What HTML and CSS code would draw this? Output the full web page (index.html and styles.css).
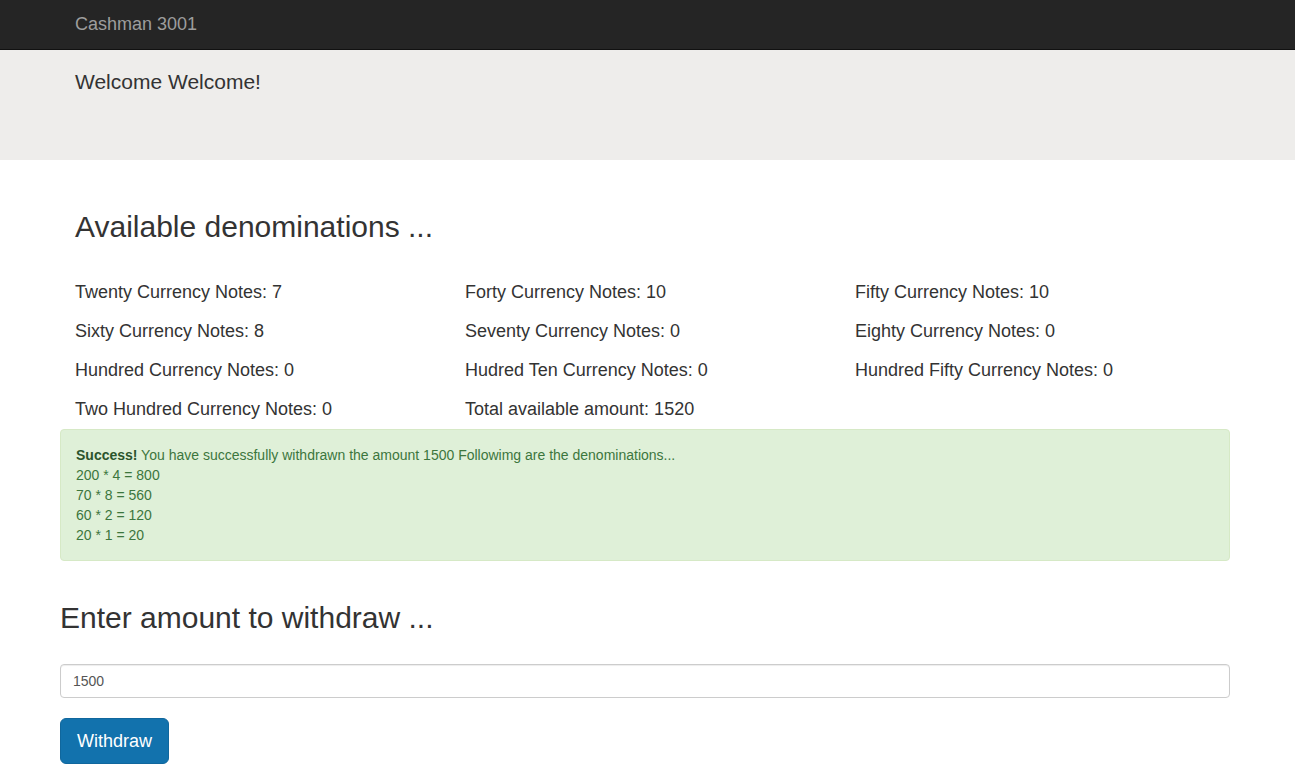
FILE: index.html
```html
<!DOCTYPE html>
<html>
<head>
<meta charset="utf-8">
<title>Cashman 3001</title>
<link rel="stylesheet" href="styles.css">
</head>
<body>
<nav class="navbar">
  <div class="container">
    <span class="brand">Cashman 3001</span>
  </div>
</nav>
<div class="jumbotron">
  <div class="container">
    <p class="lead">Welcome Welcome!</p>
  </div>
</div>
<div class="container">
  <div class="section">
    <h2 class="title">Available denominations ...</h2>
    <div class="notes">
      <div class="note">Twenty Currency Notes: 7</div>
      <div class="note">Forty Currency Notes: 10</div>
      <div class="note">Fifty Currency Notes: 10</div>
      <div class="note">Sixty Currency Notes: 8</div>
      <div class="note">Seventy Currency Notes: 0</div>
      <div class="note">Eighty Currency Notes: 0</div>
      <div class="note">Hundred Currency Notes: 0</div>
      <div class="note">Hudred Ten Currency Notes: 0</div>
      <div class="note">Hundred Fifty Currency Notes: 0</div>
      <div class="note">Two Hundred Currency Notes: 0</div>
      <div class="note">Total available amount: 1520</div>
    </div>
  </div>
  <div class="alert">
    <strong>Success!</strong> You have successfully withdrawn the amount 1500 Followimg are the denominations...<br>
    200 * 4 = 800<br>
    70 * 8 = 560<br>
    60 * 2 = 120<br>
    20 * 1 = 20
  </div>
  <h2 class="title2">Enter amount to withdraw ...</h2>
  <input class="amount" type="text" value="1500">
  <button class="btn">Withdraw</button>
</div>
</body>
</html>
```
FILE: styles.css
```css
html, body {
  margin: 0;
  padding: 0;
}
body {
  font-family: "Liberation Sans", Arial, sans-serif;
  font-size: 14px;
  line-height: 1.42857;
  color: #333;
  background: #fff;
}
.container {
  width: 1170px;
  margin-left: 60px;
  box-sizing: border-box;
}
.navbar {
  background: #252525;
  height: 50px;
  border-bottom: 1px solid #111;
  box-sizing: border-box;
}
.navbar .container {
  padding: 0 15px;
}
.brand {
  display: block;
  font-size: 18px;
  line-height: 20px;
  padding: 14px 0 15px;
  color: #9d9d9d;
}
.jumbotron {
  background: #eeedeb;
  height: 110px;
  box-sizing: border-box;
  padding-top: 17px;
  margin-bottom: 30px;
}
.jumbotron .container {
  padding: 0 15px;
}
.lead {
  margin: 0;
  font-size: 21px;
  line-height: 30px;
  font-weight: 300;
}
.section {
  padding: 20px 15px 0;
}
.title {
  font-size: 30px;
  font-weight: 500;
  line-height: 33px;
  margin: 0 0 30px;
}
.notes {
  display: grid;
  grid-template-columns: 390px 390px 390px;
}
.note {
  font-size: 18px;
  line-height: 19px;
  margin: 10px 0;
  white-space: nowrap;
}
.alert {
  background: #dff0d8;
  border: 1px solid #d6e9c6;
  border-radius: 4px;
  color: #3c763d;
  padding: 15px;
  line-height: 20px;
  margin-bottom: 20px;
}
.alert strong {
  color: #2b542c;
}
.title2 {
  font-size: 30px;
  font-weight: 500;
  line-height: 33px;
  margin: 40px 0 30px;
}
.amount {
  display: block;
  width: 100%;
  box-sizing: border-box;
  height: 34px;
  padding: 6px 12px;
  font-family: "Liberation Sans", Arial, sans-serif;
  font-size: 14px;
  color: #555;
  border: 1px solid #ccc;
  border-radius: 4px;
  box-shadow: inset 0 1px 1px rgba(0,0,0,0.075);
  margin: 0 0 20px;
}
.btn {
  display: block;
  font-family: "Liberation Sans", Arial, sans-serif;
  font-size: 18px;
  line-height: 24px;
  padding: 10px 16px;
  color: #fff;
  background: #1272ad;
  border: 1px solid #10679d;
  border-radius: 6px;
}
```
